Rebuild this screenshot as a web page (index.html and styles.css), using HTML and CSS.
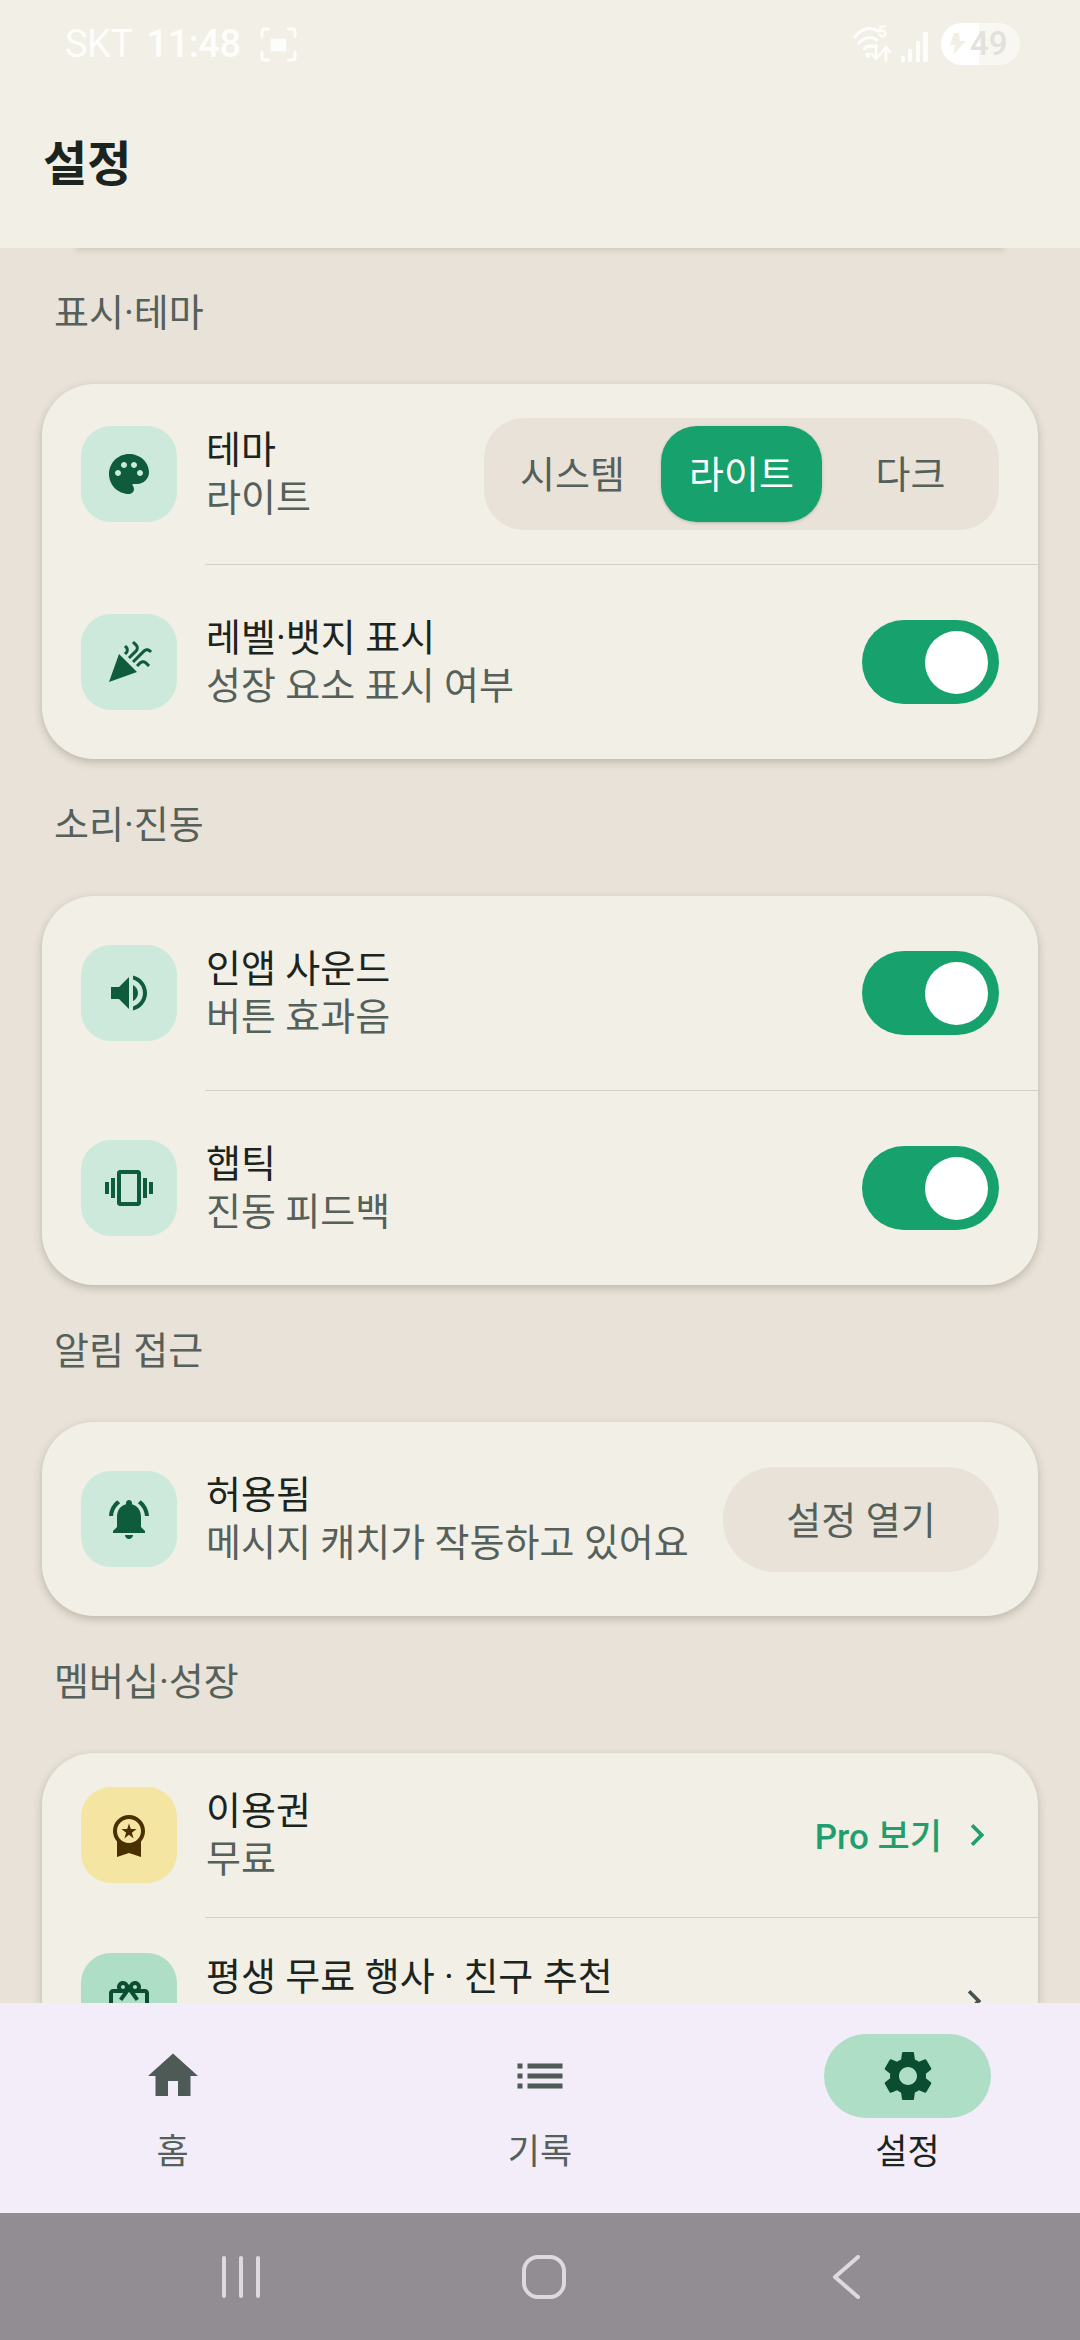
FILE: index.html
```html
<!DOCTYPE html>
<html lang="ko">
<head>
<meta charset="utf-8">
<title>설정</title>
<link rel="stylesheet" href="styles.css">
</head>
<body>
<div class="app">
  <header class="header">
    <div class="status">
      <div class="status-left">
        <span class="carrier">SKT</span>
        <span class="clock">11:48</span>
        <svg class="shot" viewBox="0 0 38 36" fill="none" stroke="#fdfdfb" stroke-width="3" stroke-linecap="round">
          <path d="M2 10V5q0-3 3-3h4M29 2h4q3 0 3 3v5M36 26v5q0 3-3 3h-4M9 34H5q-3 0-3-3v-5"/>
          <path d="M12 13h14v11H12z" fill="#fdfdfb" stroke-width="2"/>
        </svg>
      </div>
      <div class="status-right">
        <svg class="wifi" viewBox="0 0 38 42" fill="none" stroke="#fdfdfb" stroke-linecap="round">
          <path d="M2 14C9 4 19 4 25 8M6 20c5-6 12-7 18-3M11 26c3-3 7-4 11-2" stroke-width="3"/>
          <circle cx="15" cy="32" r="2.5" fill="#fdfdfb" stroke="none"/>
          <path d="M23 22v13M19 31l4 5 4-5M33 38V24M29 29l4-5 4 5" stroke-width="2.6"/>
          <text class="wifi-five" x="25" y="14">5</text>
        </svg>
        <svg class="signal" viewBox="0 0 27 30" fill="#fdfdfb">
          <rect x="0" y="24" width="4" height="6" rx="1"/>
          <rect x="7" y="17" width="4" height="13" rx="1"/>
          <rect x="15" y="9" width="4" height="21" rx="1"/>
          <rect x="22" y="0" width="5" height="30" rx="1"/>
        </svg>
        <div class="battery">
          <svg class="bolt" viewBox="0 0 16 22" fill="#f2efe7"><path d="M9 0H4L0 12h5L3 22 16 8h-6z"/></svg>
          <span class="level">49</span>
        </div>
      </div>
    </div>
    <h1 class="page-title">설정</h1>
  </header>

  <main class="scroll">
    <h2 class="section">표시·테마</h2>
    <section class="card">
      <div class="row row-short">
        <div class="tile">
          <svg viewBox="0 0 24 24"><path d="M12 2C6.49 2 2 6.49 2 12s4.49 10 10 10c1.38 0 2.5-1.12 2.5-2.5 0-.61-.23-1.2-.64-1.67-.08-.1-.13-.21-.13-.33 0-.28.22-.5.5-.5H16c3.31 0 6-2.69 6-6 0-4.96-4.49-9-10-9zm5.5 11c-.83 0-1.5-.67-1.5-1.5s.67-1.5 1.5-1.5 1.5.67 1.5 1.5-.67 1.5-1.5 1.5zm-3-4c-.83 0-1.5-.67-1.5-1.5S13.67 6 14.5 6s1.5.67 1.5 1.5S15.33 9 14.5 9zM5 11.5c0-.83.67-1.5 1.5-1.5s1.5.67 1.5 1.5S7.33 13 6.5 13 5 12.33 5 11.5zm6-4c0 .83-.67 1.5-1.5 1.5S8 8.33 8 7.5 8.67 6 9.5 6s1.5.67 1.5 1.5z"/></svg>
        </div>
        <div class="copy"><div class="title">테마</div><div class="sub">라이트</div></div>
        <div class="segment">
          <span class="seg">시스템</span>
          <span class="seg seg-on">라이트</span>
          <span class="seg">다크</span>
        </div>
      </div>
      <div class="divider"></div>
      <div class="row">
        <div class="tile">
          <svg viewBox="0 0 24 24"><path d="M2 22l14-5-9-9zM14.53 12.53l5.59-5.59c.49-.49 1.28-.49 1.77 0l.59.59 1.06-1.06-.59-.59c-1.07-1.07-2.82-1.07-3.89 0l-5.59 5.59 1.06 1.06zM10.06 6.88l-.59.59 1.06 1.06.59-.59c1.07-1.07 1.07-2.82 0-3.89l-.59-.59-1.06 1.07.59.59c.48.48.48 1.28 0 1.76zM17.06 11.88l-1.59 1.59 1.06 1.06 1.59-1.59c.49-.49 1.28-.49 1.77 0l1.61 1.61 1.06-1.06-1.61-1.61c-1.08-1.07-2.82-1.07-3.89 0zM15.06 5.88l-3.59 3.59 1.06 1.06 3.59-3.59c1.07-1.07 1.07-2.82 0-3.89l-1.59-1.59-1.06 1.06 1.59 1.59c.48.49.48 1.29 0 1.77z"/></svg>
        </div>
        <div class="copy"><div class="title">레벨·뱃지 표시</div><div class="sub">성장 요소 표시 여부</div></div>
        <div class="toggle"><span class="thumb"></span></div>
      </div>
    </section>

    <h2 class="section">소리·진동</h2>
    <section class="card">
      <div class="row">
        <div class="tile">
          <svg viewBox="0 0 24 24"><path d="M3 9v6h4l5 5V4L7 9H3zm13.5 3c0-1.77-1.02-3.29-2.5-4.03v8.05c1.48-.73 2.5-2.25 2.5-4.02zM14 3.23v2.06c2.89.86 5 3.54 5 6.71s-2.11 5.85-5 6.71v2.06c4.01-.91 7-4.49 7-8.77s-2.99-7.86-7-8.77z"/></svg>
        </div>
        <div class="copy"><div class="title">인앱 사운드</div><div class="sub">버튼 효과음</div></div>
        <div class="toggle"><span class="thumb"></span></div>
      </div>
      <div class="divider"></div>
      <div class="row">
        <div class="tile">
          <svg viewBox="0 0 24 24"><path d="M0 15h2V9H0v6zm3 2h2V7H3v10zm19-8v6h2V9h-2zm-3 8h2V7h-2v10zM16.5 3h-9C6.67 3 6 3.67 6 4.5v15c0 .83.67 1.5 1.5 1.5h9c.83 0 1.5-.67 1.5-1.5v-15c0-.83-.67-1.5-1.5-1.5zM16 19H8V5h8v14z"/></svg>
        </div>
        <div class="copy"><div class="title">햅틱</div><div class="sub">진동 피드백</div></div>
        <div class="toggle"><span class="thumb"></span></div>
      </div>
    </section>

    <h2 class="section">알림 접근</h2>
    <section class="card">
      <div class="row">
        <div class="tile">
          <svg viewBox="0 0 24 24"><path d="M7.58 4.08L6.15 2.65C3.75 4.48 2.17 7.3 2.03 10.5h2c.15-2.65 1.51-4.97 3.55-6.42zm12.39 6.42h2c-.15-3.2-1.73-6.02-4.12-7.85l-1.42 1.43c2.02 1.45 3.39 3.77 3.54 6.42zM18 11c0-3.07-1.64-5.64-4.5-6.32V4c0-.83-.67-1.5-1.5-1.5s-1.5.67-1.5 1.5v.68C7.63 5.36 6 7.92 6 11v5l-2 2v1h16v-1l-2-2v-5zm-6 11c.14 0 .27-.01.4-.04.65-.14 1.18-.58 1.44-1.18.1-.24.15-.5.15-.78h-4c.01 1.1.9 2 2.01 2z"/></svg>
        </div>
        <div class="copy"><div class="title">허용됨</div><div class="sub">메시지 캐치가 작동하고 있어요</div></div>
        <div class="pill-btn">설정 열기</div>
      </div>
    </section>

    <h2 class="section">멤버십·성장</h2>
    <section class="card">
      <div class="row row-tight">
        <div class="tile tile-gold">
          <svg viewBox="0 0 24 24"><path d="M9.68 13.69L12 11.93l2.31 1.76-.88-2.85L15.75 9h-2.84L12 6.19 11.09 9H8.25l2.31 1.84-.88 2.85zM20 10c0-4.42-3.58-8-8-8s-8 3.58-8 8c0 2.03.76 3.87 2 5.28V23l6-2 6 2v-7.72c1.24-1.41 2-3.25 2-5.28zm-8-6c3.31 0 6 2.69 6 6s-2.69 6-6 6-6-2.69-6-6 2.69-6 6-6z"/></svg>
        </div>
        <div class="copy"><div class="title">이용권</div><div class="sub">무료</div></div>
        <div class="link">Pro 보기</div>
        <svg class="chev chev-green" viewBox="0 0 24 24"><path d="M10 6L8.59 7.41 13.17 12l-4.58 4.59L10 18l6-6z"/></svg>
      </div>
      <div class="divider"></div>
      <div class="row row-referral">
        <div class="tile tile-mint">
          <svg viewBox="0 0 24 24"><path d="M20 6h-2.18c.11-.31.18-.65.18-1 0-1.66-1.34-3-3-3-1.05 0-1.96.54-2.5 1.35l-.5.67-.5-.68C10.96 2.54 10.05 2 9 2 7.34 2 6 3.34 6 5c0 .35.07.69.18 1H4c-1.11 0-1.99.89-1.99 2L2 19c0 1.11.89 2 2 2h16c1.11 0 2-.89 2-2V8c0-1.11-.89-2-2-2zm-5-2c.55 0 1 .45 1 1s-.45 1-1 1-1-.45-1-1 .45-1 1-1zM9 4c.55 0 1 .45 1 1s-.45 1-1 1-1-.45-1-1 .45-1 1-1zm11 15H4v-2h16v2zm0-5H4V8h5.08L7 10.83 8.62 12 11 8.76l1-1.36 1 1.36L15.38 12 17 10.83 14.92 8H20v6z"/></svg>
        </div>
        <div class="copy"><div class="title">평생 무료 행사 · 친구 추천</div><div class="sub">&nbsp;</div></div>
        <svg class="chev chev-dark" viewBox="0 0 24 24"><path d="M10 6L8.59 7.41 13.17 12l-4.58 4.59L10 18l6-6z"/></svg>
      </div>
    </section>
  </main>

  <nav class="tabs">
    <div class="tab">
      <div class="tab-icon"><svg viewBox="0 0 24 24"><path d="M10 20v-6h4v6h5v-8h3L12 3 2 12h3v8z"/></svg></div>
      <span class="tab-label">홈</span>
    </div>
    <div class="tab">
      <div class="tab-icon"><svg viewBox="0 0 24 24"><path d="M3 13h2v-2H3v2zm0 4h2v-2H3v2zm0-8h2V7H3v2zm4 4h14v-2H7v2zm0 4h14v-2H7v2zM7 7v2h14V7H7z"/></svg></div>
      <span class="tab-label">기록</span>
    </div>
    <div class="tab tab-on">
      <div class="tab-icon"><svg viewBox="0 0 24 24"><path d="M19.14 12.94c.04-.3.06-.61.06-.94 0-.32-.02-.64-.07-.94l2.03-1.58c.18-.14.23-.41.12-.61l-1.92-3.32c-.12-.22-.37-.29-.59-.22l-2.39.96c-.5-.38-1.03-.7-1.62-.94l-.36-2.54c-.04-.24-.24-.41-.48-.41h-3.84c-.24 0-.43.17-.47.41l-.36 2.54c-.59.24-1.13.57-1.62.94l-2.39-.96c-.22-.08-.47 0-.59.22L2.74 8.87c-.12.21-.08.47.12.61l2.03 1.58c-.05.3-.09.63-.09.94s.02.64.07.94l-2.03 1.58c-.18.14-.23.41-.12.61l1.92 3.32c.12.22.37.29.59.22l2.39-.96c.5.38 1.03.7 1.62.94l.36 2.54c.05.24.24.41.48.41h3.84c.24 0 .44-.17.47-.41l.36-2.54c.59-.24 1.13-.56 1.62-.94l2.39.96c.22.08.47 0 .59-.22l1.92-3.32c.12-.22.07-.47-.12-.61l-2.01-1.58zM12 15.6c-1.98 0-3.6-1.62-3.6-3.6s1.62-3.6 3.6-3.6 3.6 1.62 3.6 3.6-1.62 3.6-3.6 3.6z"/></svg></div>
      <span class="tab-label">설정</span>
    </div>
  </nav>

  <footer class="sysnav">
    <svg class="sys-recents" viewBox="0 0 40 42" fill="none" stroke="#dcdadd" stroke-width="4" stroke-linecap="round"><path d="M3 2v38M20 2v38M37 2v38"/></svg>
    <svg class="sys-home" viewBox="0 0 44 44" fill="none" stroke="#dcdadd" stroke-width="4"><rect x="2" y="2" width="40" height="40" rx="14"/></svg>
    <svg class="sys-back" viewBox="0 0 28 44" fill="none" stroke="#dcdadd" stroke-width="4" stroke-linecap="round" stroke-linejoin="round"><path d="M26 2L3 22l23 20"/></svg>
  </footer>
</div>
</body>
</html>
```

FILE: styles.css
```css
* { box-sizing: border-box; }
html, body { margin: 0; padding: 0; }
body {
  width: 1080px;
  height: 2340px;
  overflow: hidden;
  font-family: Roboto, "Noto Sans CJK KR", sans-serif;
  color: #1c2420;
  background: #e8e2d8;
}
.app { display: flex; flex-direction: column; width: 1080px; height: 2340px; }

/* header */
.header {
  position: relative;
  z-index: 2;
  flex: none;
  height: 248px;
  background: #f2efe7;
  box-shadow: 0 78px 6px -76px rgba(90, 80, 60, .18);
}
.status {
  display: flex;
  align-items: center;
  justify-content: space-between;
  height: 88px;
  padding: 0 60px 0 65px;
}
.status-left { display: flex; align-items: center; color: #fdfdfb; font-size: 38px; }
.carrier { font-weight: 400; letter-spacing: -.5px; }
.clock { margin-left: 14px; font-weight: 500; letter-spacing: -.5px; }
.shot { width: 37px; height: 35px; margin-left: 19px; }
.status-right { display: flex; align-items: center; }
.wifi { width: 38px; height: 42px; }
.wifi-five { font-size: 15px; fill: #fdfdfb; font-family: Roboto, sans-serif; }
.signal { width: 27px; height: 30px; margin-left: 10px; margin-top: 6px; }
.battery {
  display: flex;
  align-items: center;
  width: 79px;
  height: 42px;
  margin-left: 13px;
  padding-left: 9px;
  border-radius: 21px;
  background: linear-gradient(90deg, #fff 48%, #f8f7f2 48%);
}
.bolt { width: 16px; height: 22px; flex: none; }
.level { margin-left: 4px; font-size: 33px; font-weight: 500; line-height: 42px; color: #e3e1da; }
.page-title {
  margin: 45px 0 0 43px;
  font-size: 48px;
  font-weight: 700;
  line-height: 64px;
  color: #1c2420;
}

/* content */
.scroll {
  flex: none;
  height: 1755px;
  overflow: hidden;
  padding: 41px 42px 0;
}
.section {
  margin: 42px 0 47px 12px;
  font-size: 38px;
  font-weight: 400;
  line-height: 48px;
  color: #55605a;
}
.section:first-child { margin-top: 0; }
.card {
  border-radius: 52px;
  background: #f2efe7;
  box-shadow: 0 3px 9px rgba(80, 70, 50, .28);
}
.row {
  display: flex;
  align-items: center;
  min-height: 194px;
  padding: 0 39px;
}
.row-short { min-height: 180px; }
.row-tight { min-height: 164px; }
.row-referral { min-height: 166px; }
.divider { height: 1px; margin-left: 163px; background: #d3cfc3; }
.tile {
  display: flex;
  align-items: center;
  justify-content: center;
  flex: none;
  width: 96px;
  height: 96px;
  border-radius: 30px;
  background: #cde9dc;
}
.tile svg { width: 48px; height: 48px; fill: #0f5c3c; }
.tile-gold { background: #f5e5a2; }
.tile-gold svg { fill: #4a3000; }
.tile-mint { background: #aedec5; }
.tile-mint svg { fill: #0b4d30; }
.copy { flex: 1; min-width: 0; margin-left: 29px; }
.title { font-size: 38px; font-weight: 400; line-height: 48px; white-space: nowrap; color: #1c2420; }
.sub { font-size: 38px; font-weight: 400; line-height: 48px; white-space: nowrap; color: #55605a; }

/* theme selector */
.segment {
  display: flex;
  flex: none;
  gap: 8px;
  width: 515px;
  height: 112px;
  padding: 8px;
  border-radius: 40px;
  background: #e8e2d8;
}
.seg {
  display: flex;
  align-items: center;
  justify-content: center;
  flex: 1;
  padding-bottom: 5px;
  border-radius: 36px;
  font-size: 38px;
  color: #55605a;
}
.seg-on { background: #17a16d; color: #fff; box-shadow: 0 1px 3px rgba(60, 60, 40, .25); }

/* switches and buttons */
.toggle {
  display: flex;
  align-items: center;
  justify-content: flex-end;
  flex: none;
  width: 137px;
  height: 84px;
  padding-right: 11px;
  border-radius: 42px;
  background: #17a16d;
}
.thumb { width: 63px; height: 63px; border-radius: 50%; background: #fff; }
.pill-btn {
  display: flex;
  align-items: center;
  justify-content: center;
  flex: none;
  width: 276px;
  height: 105px;
  padding-bottom: 3px;
  border-radius: 52px;
  background: #e8e2d8;
  font-size: 38px;
  color: #55605a;
}
.link { flex: none; padding-bottom: 3px; font-size: 35px; font-weight: 500; color: #1f9f6e; }
.chev { flex: none; width: 44px; height: 44px; }
.chev-green { margin-left: 13px; fill: #1f9f6e; }
.chev-dark { margin-right: 3px; fill: #4a524e; }

/* bottom tabs */
.tabs {
  position: relative;
  z-index: 2;
  display: flex;
  justify-content: space-between;
  flex: none;
  height: 210px;
  padding: 31px 89px 0;
  background: #f2edf8;
}
.tab { display: flex; flex-direction: column; align-items: center; width: 167px; }
.tab-icon {
  display: flex;
  align-items: center;
  justify-content: center;
  width: 167px;
  height: 84px;
  border-radius: 42px;
}
.tab-icon svg { width: 60px; height: 60px; fill: #4d5a55; }
.tab-label { margin-top: 11px; font-size: 35px; line-height: 48px; color: #55605a; }
.tab-on .tab-icon { background: #aedec5; }
.tab-on .tab-icon svg { fill: #0b4d30; }
.tab-on .tab-label { color: #1c2420; }

/* system navigation */
.sysnav {
  display: flex;
  align-items: center;
  flex: none;
  height: 127px;
  padding: 0 0 0 221px;
  background: #918d93;
}
.sys-recents { width: 40px; height: 42px; }
.sys-home { width: 44px; height: 44px; margin-left: 261px; }
.sys-back { width: 28px; height: 44px; margin-left: 266px; }
```
